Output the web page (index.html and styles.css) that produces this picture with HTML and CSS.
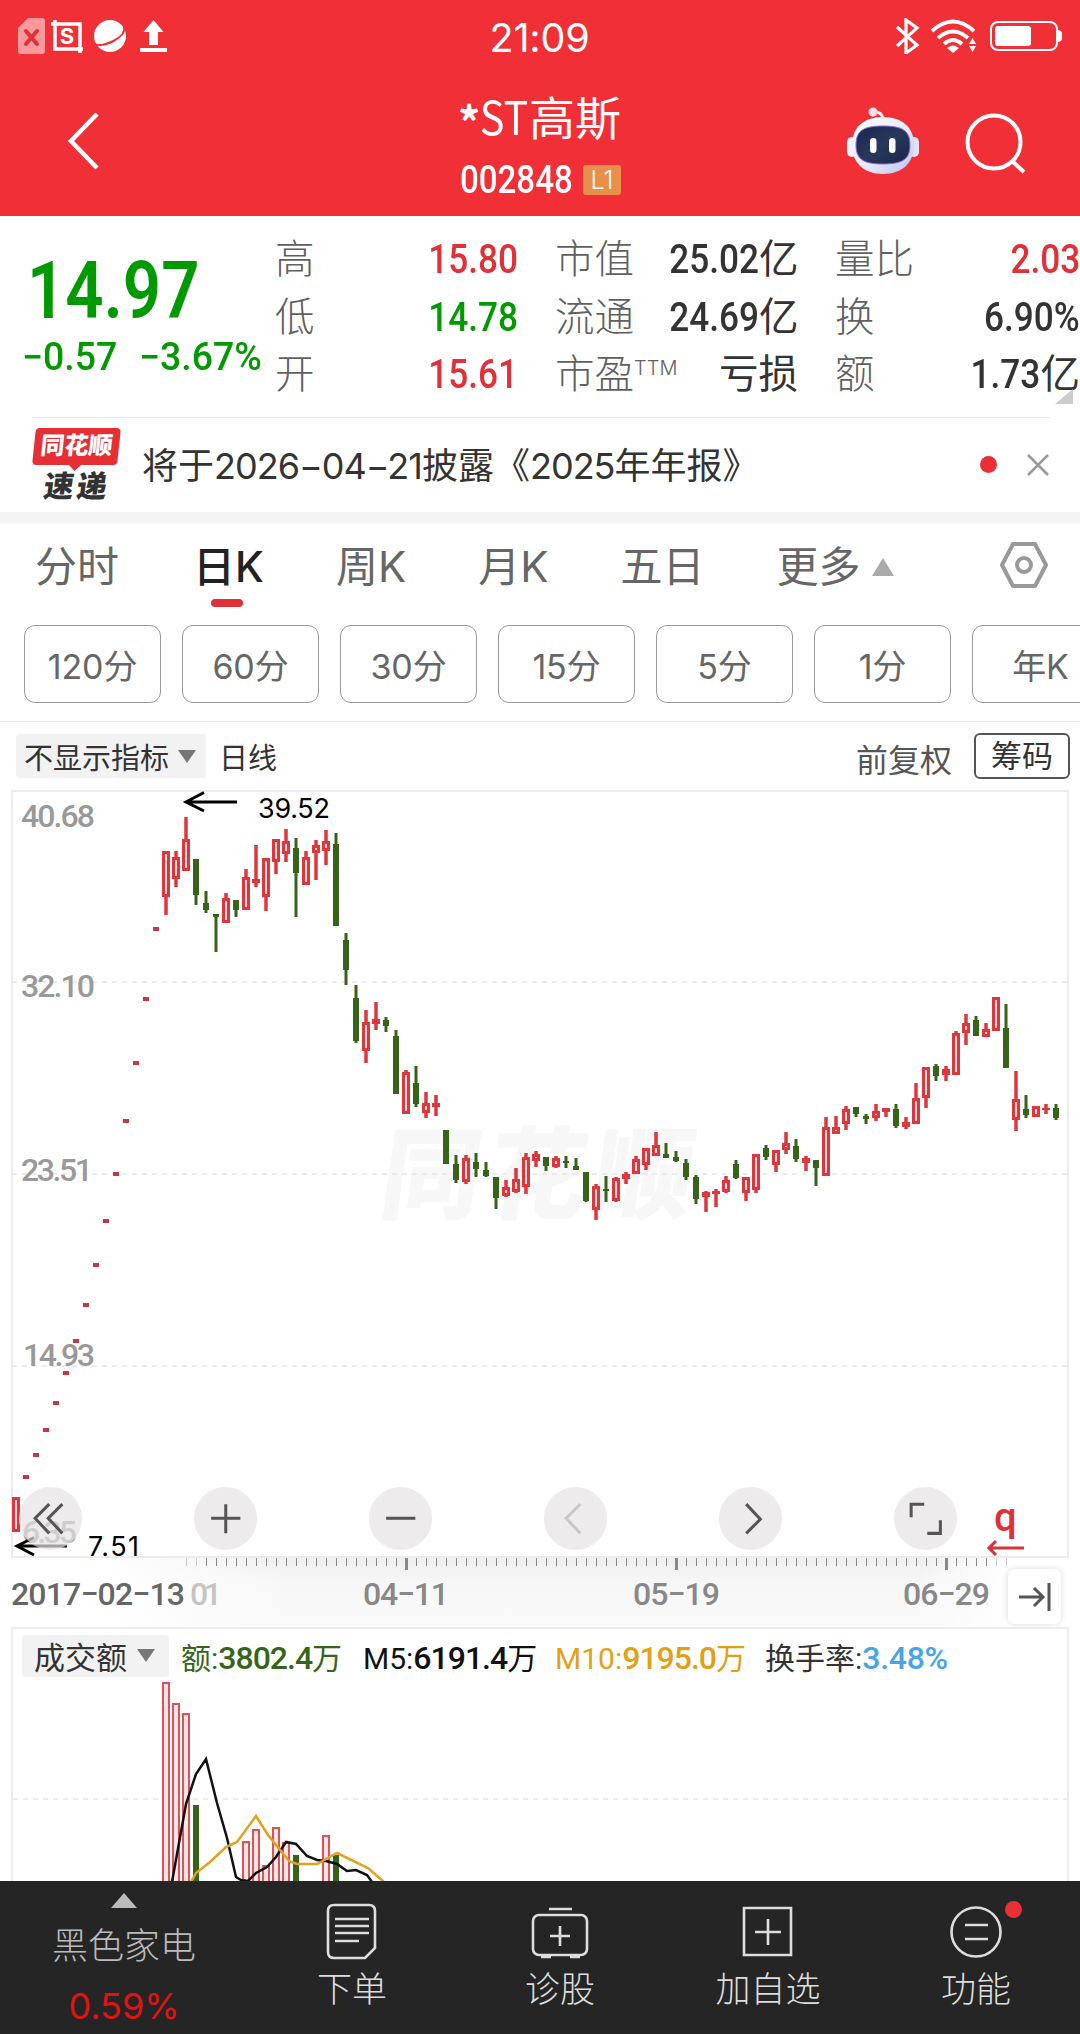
FILE: index.html
```html
<!DOCTYPE html>
<html lang="zh-CN">
<head>
  <meta charset="UTF-8">
  <meta name="viewport" content="width=device-width, initial-scale=1.0">
  <title>*ST高斯 002848</title>
  <link rel="stylesheet" href="styles.css">
</head>
<body>
  <header class="top">
    <div class="status">
      <svg class="status-left" width="150" height="36" viewBox="18 18 150 36">
        <path d="M28 18h14q3 0 3 3v30q0 3-3 3H21q-3 0-3-3V28z" fill="#fa989c"/>
        <path d="M26 31l11 13M37 31L26 44" stroke="#e03038" stroke-width="4" stroke-linecap="round"/>
        <path d="M51 24h29v29M55 20v29h28" fill="none" stroke="#fff" stroke-width="3.5"/>
        <text x="67" y="44" text-anchor="middle" class="s-mark">S</text>
        <circle cx="110" cy="36" r="16" fill="#fff"/>
        <path d="M94 44c10 4 33-7 30-17" fill="none" stroke="#f03036" stroke-width="2"/>
        <path d="M153.500 20l10 12h-5.500v13h-9V32h-5.500zM140 48h27v4h-27z" fill="#fff"/>
      </svg>
      <span class="clock">21:09</span>
      <svg class="status-right" width="168" height="36" viewBox="895 18 168 36" fill="none" stroke="#fff">
        <path d="M897 27l20 18-11 8V20l11 8-20 18" stroke-width="3.200"/>
        <path d="M932 31q21-19 42 0M938 38q15-13 30 0M944 44q9-8 18 0" stroke-width="4"/>
        <path d="M947 48q6-5 12 0l-6 5z" fill="#fff" stroke="none"/>
        <path d="M969 44l3.500-6 3.500 6zM969 46l3.500 6 3.500-6z" fill="#fff" stroke="none"/>
        <rect x="991" y="22" width="66" height="28" rx="7" stroke-width="2"/>
        <rect x="995" y="26" width="36" height="20" rx="3" fill="#fff" stroke="none"/>
        <path d="M1058 30q4 1 4 3v6q0 2-4 3z" fill="#fff" stroke="none"/>
      </svg>
    </div>
    <div class="titlebar">
      <svg class="back" width="34" height="60" viewBox="0 0 34 60"><path d="M31 3L5 30l26 27" fill="none" stroke="#fff" stroke-width="4.500"/></svg>
      <div class="title">
        <h1><b>*</b><span>ST</span>高斯</h1>
        <div class="code"><span class="code-num">002848</span><b>L1</b></div>
      </div>
      <svg class="robot" width="74" height="68" viewBox="0 0 74 68">
        <defs>
          <linearGradient id="shell" x1="0" y1="0" x2="1" y2="1"><stop offset="0" stop-color="#fff"/><stop offset=".55" stop-color="#e6eafb"/><stop offset="1" stop-color="#b9c0ef"/></linearGradient>
          <linearGradient id="face" x1="0" y1="0" x2="1" y2="1"><stop offset="0" stop-color="#16264a"/><stop offset=".5" stop-color="#29385c"/><stop offset="1" stop-color="#1a2547"/></linearGradient>
        </defs>
        <path d="M27 5q9-1 10 7" fill="none" stroke="#f5e9f3" stroke-width="3"/>
        <circle cx="27" cy="5" r="4.500" fill="#fbdfe6"/>
        <rect x="1" y="30" width="10" height="20" rx="5" fill="#f4f6ff"/>
        <rect x="63" y="30" width="10" height="20" rx="5" fill="#dfe3fa"/>
        <path d="M37 10c20 0 31 11 31 28S57 67 37 67 6 55 6 38s11-28 31-28z" fill="url(#shell)"/>
        <path d="M37 19c20 0 27 5 27 19s-7 19-27 19-27-5-27-19 7-19 27-19z" fill="url(#face)" stroke="#8d6be0" stroke-width="1"/>
        <rect x="24" y="31" width="6.500" height="15" rx="3.200" fill="#fff"/>
        <rect x="43" y="31" width="6.500" height="15" rx="3.200" fill="#fff"/>
      </svg>
      <svg class="search" width="64" height="64" viewBox="0 0 64 64" fill="none" stroke="#fff" stroke-width="4"><circle cx="31" cy="31" r="26.500"/><path d="M49 50l12 11"/></svg>
    </div>
  </header>

  <section class="quote">
    <div class="price">
      <strong>14.97</strong>
      <div class="change"><span>−0.57</span><span>−3.67%</span></div>
    </div>
    <dl class="stats">
      <dt>高</dt><dd class="up"><i>15.80</i></dd>
      <dt>市值</dt><dd><i>25.02</i>亿</dd>
      <dt>量比</dt><dd class="up"><i>2.03</i></dd>
      <dt>低</dt><dd class="down"><i>14.78</i></dd>
      <dt>流通</dt><dd><i>24.69</i>亿</dd>
      <dt>换</dt><dd><i>6.90%</i></dd>
      <dt>开</dt><dd class="up"><i>15.61</i></dd>
      <dt>市盈<sup>TTM</sup></dt><dd>亏损</dd>
      <dt>额</dt><dd><i>1.73</i>亿</dd>
    </dl>
    <span class="corner"></span>
  </section>

  <section class="notice">
    <div class="express"><span class="express-tag">同花顺</span><span class="express-name">速递</span></div>
    <p>将于<span>2026−04−21</span>披露《<span>2025</span>年年报》</p>
    <span class="dot"></span>
    <svg class="close" width="24" height="24" viewBox="0 0 24 24"><path d="M2 2l20 20M22 2L2 22" stroke="#999" stroke-width="2.500"/></svg>
  </section>

  <nav class="tabs">
    <a>分时</a><a class="active">日K</a><a>周K</a><a>月K</a><a>五日</a><a class="more">更多</a>
    <svg width="50" height="48" viewBox="0 0 50 48" fill="none" stroke="#999" stroke-width="4"><path d="M14 3h22l11 21-11 21H14L3 24z" stroke-linejoin="round"/><circle cx="25" cy="24" r="7"/></svg>
  </nav>
  <div class="periods">
    <button>120分</button><button>60分</button><button>30分</button><button>15分</button><button>5分</button><button>1分</button><button>年K</button>
  </div>

  <div class="toolbar">
    <span class="select">不显示指标</span>
    <span class="line-name">日线</span>
    <span class="adjust">前复权</span>
    <button>筹码</button>
  </div>

  <section class="chart">
    <svg id="kline" width="1080" height="840" viewBox="0 787 1080 840">
      <defs>
        <linearGradient id="ruler" x1="0" y1="0" x2="0" y2="1"><stop offset="0" stop-color="#efefef"/><stop offset=".4" stop-color="#f7f7f7"/><stop offset="1" stop-color="#f9f9f9"/></linearGradient>
        <linearGradient id="fade" x1="0" x2="1"><stop offset="0" stop-color="#fff"/><stop offset=".2" stop-color="#fff" stop-opacity="0"/><stop offset=".9" stop-color="#fff" stop-opacity="0"/><stop offset="1" stop-color="#fff"/></linearGradient>
      </defs>
      <rect x="110" y="1557" width="900" height="69" fill="url(#ruler)"/>
      <rect x="110" y="1557" width="900" height="69" fill="url(#fade)"/>
      <text class="watermark" x="0" y="0" transform="translate(377 1211) skewX(-8)" textLength="312">同花顺</text>
      <g class="grid">
        <path d="M12 982h1056M12 1174h1056M12 1366h1056"/>
      </g>
      <rect class="frame" x="12" y="791" width="1056" height="766"/>
      <g class="axis">
        <text x="21" y="827" textLength="74">40.68</text>
        <text x="21" y="997" textLength="74">32.10</text>
        <text x="21" y="1181" textLength="72">23.51</text>
        <text x="23" y="1366" textLength="72">14.93</text>
        <text x="22" y="1543" textLength="55">6.35</text>
      </g>
      <g id="candles"></g>
      <g class="mark">
        <path d="M237 802h-51M204 792.500l-18 9.500 18 9"/>
        <text x="258" y="818" textLength="72">39.52</text>
        <path d="M67 1546H17M34 1537.500L17 1546l17 9"/>
        <text x="88" y="1556" textLength="51">7.51</text>
      </g>
      <g class="flag">
        <text x="994" y="1531">q</text>
        <path d="M1024 1548h-34M996 1541l-7 7 7 7"/>
      </g>
      <g id="ticks"></g>
      <g class="dates">
        <text x="190" y="1605" textLength="32" class="faint">01</text>
        <text x="363" y="1605" textLength="86">04−11</text>
        <text x="633" y="1605" textLength="87">05−19</text>
        <text x="903" y="1605" textLength="87">06−29</text>
        <text x="11" y="1605" textLength="174" class="first">2017−02−13</text>
      </g>
      <rect class="end" x="1008" y="1569" width="53" height="55" rx="7"/>
      <path class="end-icon" d="M1019 1597h23M1034 1588l9 9-9 9M1049 1583v28"/>
    </svg>
    <div class="controls">
      <button><svg viewBox="0 0 62 62"><path d="M30 17L16 31l14 15M43 17L29 31l14 15"/></svg></button>
      <button><svg viewBox="0 0 62 62"><path d="M17 31h29M31.500 17v29"/></svg></button>
      <button><svg viewBox="0 0 62 62"><path d="M17 31h29"/></svg></button>
      <button class="off"><svg viewBox="0 0 62 62"><path d="M36 17L22 31l14 15"/></svg></button>
      <button><svg viewBox="0 0 62 62"><path d="M27 17l14 15-14 14"/></svg></button>
      <button><svg viewBox="0 0 62 62"><path d="M30 17H17v13M46 33v13H33"/></svg></button>
    </div>
  </section>

  <section class="volume">
    <div class="legend">
      <span class="select">成交额</span>
      <span class="v1">额:<i>3802.4</i>万</span>
      <span class="v2">M5:<i>6191.4</i>万</span>
      <span class="v3">M10:<i>9195.0</i>万</span>
      <span class="v4">换手率:<i>3.48%</i></span>
    </div>
    <svg width="1054" height="200" viewBox="13 1681 1054 200">
      <path class="grid" d="M13 1799h1054"/>
      <g id="bars"></g>
      <polyline class="m5" points="172,1882 186,1804 196,1774 206,1759 217,1803 227,1838 236,1877 241,1880 248,1881 256,1873 267,1867 276,1857 286,1842 296,1844 307,1856 317,1860 326,1861 337,1864 347,1871 356,1870 367,1875 372,1882"/>
      <polyline class="m10" points="191,1882 196,1873 210,1862 226,1847 237,1842 256,1816 268,1835 289,1861 297,1864 317,1864 337,1853 368,1868 384,1882"/>
    </svg>
  </section>

  <footer class="bottom">
    <a class="sector"><span class="arrow"></span><span>黑色家电</span><em>0.59%</em></a>
    <a><svg width="58" height="58" viewBox="0 0 58 58"><path d="M11 2h35q6 0 6 6v37L42 55H11q-6 0-6-6V8q0-6 6-6zM12 16h34M12 23h34M12 30h34M12 38h24"/></svg>下单</a>
    <a><svg width="58" height="58" viewBox="0 0 58 58"><rect x="2" y="12" width="54" height="40" rx="6"/><path d="M18 6h23M29 23v20M19 33h20M10 54h10M39 54h10"/></svg>诊股</a>
    <a><svg width="58" height="58" viewBox="0 0 58 58"><path d="M5 5h47v47H5zM16 29h26M29 16v26"/></svg>加自选</a>
    <a><svg width="58" height="58" viewBox="0 0 58 58"><circle cx="29" cy="29" r="24.500"/><path d="M18 22h23M18 36h23"/></svg>功能<span class="dot"></span></a>
  </footer>

  <script src="chart.js"></script>
</body>
</html>
```
FILE: styles.css
```css
* {
  box-sizing: border-box;
}

body {
  margin: 0;
  width: 1080px;
  height: 2034px;
  overflow: hidden;
  background: #fff;
  color: #333;
  font-family: Inter, "Noto Sans CJK SC", sans-serif;
}

button {
  font: inherit;
  color: inherit;
  padding: 0;
  background: none;
  border: none;
}

i, em {
  font-style: normal;
}

svg {
  display: block;
}

/* header */
.top {
  height: 216px;
  background: #f03036;
  color: #fff;
}

.status {
  height: 72px;
  padding: 18px 17px 0 18px;
  display: flex;
  justify-content: space-between;
}

.s-mark {
  font: bold 22px Inter, sans-serif;
  fill: #fff;
}

.clock {
  margin-left: 16px;
  font-size: 39.5px;
  line-height: 40px;
  letter-spacing: -.2px;
}

.titlebar {
  height: 144px;
  display: flex;
  align-items: flex-start;
}

.back {
  margin: 39px 0 0 66px;
}

.title {
  width: 161px;
  margin: 18px 0 0 360px;
}

.title h1 {
  margin: 0 0 0 -2px;
  display: flex;
  align-items: center;
  height: 50px;
  font-size: 46px;
  font-weight: 400;
  line-height: 50px;
  white-space: nowrap;
  font-family: "Noto Sans CJK SC", sans-serif;
}

.title h1 b {
  width: 20px;
  padding-top: 10px;
  font-size: 44px;
}

.title h1 span {
  transform: scaleX(.9);
  margin: 0 -2px 0 -1px;
}

.code {
  display: flex;
  align-items: center;
  justify-content: space-between;
  margin-top: 23px;
  height: 34px;
}

.code-num {
  width: 112px;
  font: 500 38px/34px Roboto, sans-serif;
  transform: scaleX(.87);
  transform-origin: left;
}

.code b {
  width: 38px;
  height: 30px;
  border-radius: 3px;
  background: #e8904a;
  font-size: 25px;
  font-weight: 300;
  line-height: 30px;
  text-align: center;
}

.robot {
  margin: 35px 0 0 225px;
}

.search {
  margin: 39px 0 0 43px;
}

/* quote */
.quote {
  position: relative;
  display: flex;
  height: 201px;
}

.price {
  width: 276px;
  padding-left: 27px;
  color: #009900;
  font-family: Roboto, sans-serif;
}

.price strong {
  display: block;
  height: 94px;
  margin-top: 28px;
  font-size: 79px;
  font-weight: 600;
  line-height: 94px;
  transform: scaleX(.85);
  transform-origin: left;
}

.change {
  display: flex;
  margin-left: -5px;
  font-size: 38px;
  font-weight: 500;
  line-height: 38px;
  white-space: nowrap;
}

.change span {
  width: 117px;
  transform: scaleX(.985);
  transform-origin: left;
}

.stats {
  margin: 15px 0 0;
  display: grid;
  grid-template-columns: 93px 150px 139px 141px 129px 153px;
  grid-template-rows: repeat(3, 57.5px);
  line-height: 57px;
  font-size: 39.5px;
}

.stats dt {
  color: #606060;
  font-weight: 300;
  white-space: nowrap;
}

.stats dt:nth-of-type(3n+2) {
  padding-left: 37px;
}

.stats dt:nth-of-type(3n) {
  padding-left: 37px;
}

.stats sup {
  font-size: 20px;
  line-height: 1;
  vertical-align: 13px;
}

.stats dd {
  margin: 0;
  text-align: right;
  white-space: nowrap;
}

.stats i {
  display: inline-block;
  font: 500 40px/57px Roboto, sans-serif;
  transform: scaleX(.88);
  transform-origin: right;
}

.up {
  color: #e03038;
}

.down {
  color: #009900;
}

.corner {
  position: absolute;
  right: 7px;
  bottom: 13px;
  border-left: 18px solid transparent;
  border-bottom: 15px solid #ccc;
}

/* notice */
.notice {
  display: flex;
  height: 95px;
  margin: 0 30px 0 32px;
  border-top: 1px solid #ebebeb;
}

.express {
  display: flex;
  flex-direction: column;
  align-items: center;
  width: 89px;
  padding-top: 10px;
}

.express-tag {
  position: relative;
  width: 85px;
  height: 37px;
  border-radius: 4px;
  background: #e62e34;
  color: #fff;
  font-size: 24px;
  font-weight: 900;
  line-height: 36px;
  text-align: center;
  transform: skewX(-6deg);
}

.express-tag::after {
  content: "";
  position: absolute;
  left: 36px;
  top: 36px;
  border: 7px solid transparent;
  border-top-color: #e62e34;
  border-bottom: 0;
}

.express-name {
  margin-top: 5px;
  font-size: 30px;
  font-weight: 900;
  line-height: 32px;
  letter-spacing: 3px;
  transform: skewX(-8deg);
}

.notice p {
  flex: 1;
  margin: 0 0 0 21px;
  font-size: 36px;
  line-height: 96px;
  white-space: nowrap;
}

.notice p span {
  letter-spacing: -1px;
}

.notice .dot {
  margin: 38px 29px 0 0;
}

.dot {
  width: 17px;
  height: 17px;
  border-radius: 50%;
  background: #e83035;
}

.close {
  margin-top: 35px;
}

/* tabs */
.tabs {
  display: flex;
  height: 113px;
  padding: 0 31px 0 35px;
  border-top: 11px solid #f5f4f5;
  color: #666;
  font-size: 42px;
  line-height: 87px;
  white-space: nowrap;
}

.tabs a {
  position: relative;
  margin-right: 72px;
}

.tabs a:first-child {
  margin-right: 74px;
}

.tabs .active {
  color: #222;
  font-weight: 500;
}

.tabs .active::after {
  content: "";
  position: absolute;
  left: 18px;
  top: 76px;
  width: 32px;
  height: 8px;
  border-radius: 4px;
  background: #e03038;
}

.tabs .more {
  margin-right: 0;
}

.tabs .more::after {
  content: "";
  display: inline-block;
  margin-left: 12px;
  vertical-align: 6px;
  border: 11px solid transparent;
  border-bottom: 18px solid #aaa;
  border-top: 0;
}

.tabs svg {
  margin: 18px 0 0 auto;
}

.periods {
  display: flex;
  gap: 21px;
  height: 97px;
  padding-left: 24px;
  overflow: hidden;
  border-bottom: 1px solid #e8e8e8;
}

.periods button {
  flex: none;
  width: 137px;
  height: 78px;
  border: 1.5px solid #999;
  border-radius: 11px;
  color: #666;
  font-size: 34px;
  letter-spacing: -.1px;
}

.toolbar {
  display: flex;
  align-items: center;
  height: 65px;
  padding: 3px 10px 0 16px;
  font-size: 29px;
}

.select {
  display: flex;
  align-items: center;
  justify-content: space-between;
  width: 190px;
  height: 44px;
  padding: 0 10px 0 8px;
  border-radius: 4px;
  background: #f2f2f2;
  white-space: nowrap;
}

.select::after {
  content: "";
  border: 9px solid transparent;
  border-top: 13px solid #777;
  border-bottom: 0;
}

.line-name {
  margin-left: 13px;
}

.adjust {
  margin-left: auto;
  margin-right: 22px;
  padding-top: 3px;
  font-size: 32px;
  color: #555;
}

.toolbar button {
  width: 96px;
  height: 46px;
  border: 2px solid #555;
  border-radius: 6px;
  font-size: 31px;
  line-height: 40px;
}

/* k-line chart */
.chart {
  position: relative;
  height: 840px;
}

.grid,
.grid path {
  fill: none;
  stroke: #e6e6e6;
  stroke-width: 1.5;
  stroke-dasharray: 5 5;
}

.frame {
  fill: none;
  stroke: #ececec;
  stroke-width: 2;
}

.watermark {
  font: 900 100px "Noto Sans CJK SC", sans-serif;
  fill: #f7f7f7;
}

.axis text {
  font: 500 32px Roboto, sans-serif;
  fill: #999;
}

.mark path {
  fill: none;
  stroke: #000;
  stroke-width: 3;
}

.mark text {
  font: 400 27px Inter, sans-serif;
}

.flag text {
  font: 500 40px Roboto, sans-serif;
  fill: #e03038;
}

.flag path {
  fill: none;
  stroke: #d8323a;
  stroke-width: 3;
}

.dates text {
  font: 500 32px Roboto, sans-serif;
  fill: #888;
}

.dates .faint {
  fill: #c4c4c4;
}

.dates .first {
  fill: #666;
}

.end {
  fill: #fff;
  filter: drop-shadow(0 0 3px rgba(0, 0, 0, .15));
}

.end-icon {
  fill: none;
  stroke: #555;
  stroke-width: 3;
}

.controls {
  position: absolute;
  left: 19px;
  top: 700px;
  display: flex;
  gap: 112.5px;
}

.controls button {
  width: 62.5px;
  height: 62.5px;
  border-radius: 50%;
  background: rgba(231, 227, 229, .7);
}

.controls path {
  fill: none;
  stroke: #555;
  stroke-width: 3;
}

.controls .off path {
  stroke: #c8c8c8;
}

/* volume */
.volume {
  height: 254px;
  margin: 0 11px;
  border: 2px solid #ececec;
  border-bottom: 0;
}

.legend {
  display: flex;
  align-items: center;
  height: 52px;
  padding-top: 1px;
  padding-left: 9px;
  font-size: 30px;
  font-family: Roboto, "Noto Sans CJK SC", sans-serif;
  white-space: nowrap;
}

.legend .select {
  width: 147px;
  height: 42px;
  padding: 0 14px 0 12px;
  margin-right: 12px;
  font-size: 31px;
}

.legend i {
  font-size: 32px;
  font-weight: 500;
  letter-spacing: -1px;
}

.v1 {
  width: 182px;
  color: #35651a;
}

.v2 {
  width: 192px;
  color: #111;
}

.v3 {
  width: 210px;
  color: #e3a014;
}

.legend .v4 i {
  color: #45a5e6;
  letter-spacing: -.3px;
}

.m5,
.m10 {
  fill: none;
  stroke: #111;
  stroke-width: 2.5;
}

.m10 {
  stroke: #e3a11c;
}

/* bottom bar */
.bottom {
  display: flex;
  height: 153px;
  background: #252525;
  color: #ddd;
  font-size: 35px;
  font-weight: 300;
}

.bottom a {
  position: relative;
  flex: 1;
  display: flex;
  flex-direction: column;
  align-items: center;
  padding-top: 22px;
  line-height: 56px;
}

.bottom .sector {
  flex: none;
  width: 248px;
  padding-top: 12px;
  color: #bbb;
  font-size: 36px;
}

.sector .arrow {
  border: 13px solid transparent;
  border-bottom: 15px solid #bbb;
  border-top: 0;
  margin-bottom: 10px;
}

.sector em {
  margin-top: 4px;
  color: #e01313;
  font-weight: 400;
}

.bottom svg {
  fill: none;
  stroke: #ddd;
  stroke-width: 2.6;
}

.bottom .dot {
  position: absolute;
  left: 133px;
  top: 20px;
}
```
FILE: chart.js
```js
const UP = '#de363c';
const DOWN = '#356419';
const GAP = 10;
const START = 16;

// limit-up days: a single short dash each
const dashes = [1477, 1455, 1430, 1403, 1373, 1341, 1305, 1265, 1221, 1174, 1121, 1063, 999, 929];

// [direction, high, body top, body bottom, low]
const candles = [
  ['r',851,851,897,915],['r',851,857,879,887],['r',817,839,871,871],['g',859,859,895,905],
  ['g',891,903,910,913],['g',914,914,917,952],['r',893,898,923,923],['g',900,900,910,917],
  ['r',869,877,910,910],['r',845,879,883,887],['r',858,858,897,911],['r',839,839,862,874],
  ['r',829,841,854,862],['g',838,848,873,917],['r',851,857,885,885],['r',840,845,853,880],
  ['r',830,841,851,865],['g',833,844,926,926],['g',933,940,970,985],['g',985,998,1041,1043],
  ['r',1010,1022,1051,1063],['r',1002,1019,1024,1030],['g',1017,1020,1026,1032],['g',1030,1036,1094,1094],
  ['r',1070,1072,1114,1114],['g',1066,1083,1104,1107],['r',1092,1103,1113,1118],['r',1095,1103,1107,1116],
  ['g',1130,1130,1164,1164],['g',1155,1164,1180,1183],['r',1155,1158,1182,1184],['g',1153,1162,1169,1177],
  ['g',1162,1170,1176,1177],['g',1177,1177,1198,1209],['r',1180,1187,1196,1197],['r',1168,1179,1192,1193],
  ['r',1153,1157,1187,1194],['r',1151,1154,1161,1167],['g',1157,1157,1166,1171],['r',1156,1158,1167,1168],
  ['g',1156,1161,1163,1168],['g',1158,1166,1170,1170],['g',1172,1172,1201,1202],['r',1184,1186,1210,1220],
  ['g',1176,1189,1191,1202],['r',1177,1178,1201,1202],['r',1172,1174,1179,1184],['r',1156,1159,1174,1174],
  ['r',1148,1148,1165,1170],['r',1132,1145,1156,1156],['g',1143,1154,1158,1158],['g',1151,1157,1161,1162],
  ['g',1159,1163,1177,1180],['g',1175,1177,1199,1204],['r',1191,1192,1197,1212],['r',1189,1191,1194,1207],
  ['r',1176,1180,1192,1193],['g',1160,1164,1178,1179],['r',1177,1177,1193,1201],['r',1154,1154,1190,1193],
  ['g',1145,1148,1157,1160],['r',1150,1150,1165,1172],['r',1132,1143,1150,1154],['g',1139,1146,1159,1162],
  ['r',1156,1158,1163,1171],['g',1160,1160,1168,1186],['r',1117,1127,1176,1176],['r',1116,1127,1134,1134],
  ['r',1106,1109,1124,1130],['g',1107,1107,1114,1117],['g',1114,1116,1119,1124],['r',1104,1111,1118,1121],
  ['r',1108,1108,1112,1117],['g',1104,1109,1126,1128],['r',1117,1122,1127,1129],['r',1083,1098,1124,1124],
  ['r',1067,1067,1098,1108],['g',1064,1066,1076,1081],['r',1066,1069,1075,1081],['r',1031,1033,1075,1075],
  ['r',1014,1023,1033,1045],['g',1016,1020,1036,1036],['r',1023,1029,1037,1037],['r',997,997,1031,1031],
  ['g',1004,1028,1068,1068],['r',1071,1099,1120,1131],['g',1095,1109,1115,1118],['r',1106,1106,1117,1117],
  ['r',1104,1108,1110,1114],['g',1104,1108,1118,1120]
];

// [x, top, direction]
const volumes = [
  [166,1682,'r'],[176,1703,'r'],[186,1713,'r'],[196,1805,'g'],[246,1841,'r'],[256,1829,'r'],
  [266,1865,'r'],[276,1827,'r'],[286,1842,'r'],[296,1855,'g'],[326,1835,'r'],[336,1855,'g']
];

const rect = (x, y, w, h, fill) => `<rect x="${x}" y="${y}" width="${w}" height="${h}" fill="${fill}"/>`;

function candle(x, [dir, high, top, bottom, low]) {
  if (dir === 'g') {
    return rect(x - 1.5, high, 3, low - high, DOWN) + rect(x - 3, top, 6, bottom - top, DOWN);
  }
  let out = rect(x - 1.75, high, 3.5, low - high, UP) + rect(x - 4, top, 8, bottom - top, UP);
  if (bottom - top > 6) {
    out += rect(x - 1, top + 3, 2, bottom - top - 6, '#ffd9d9');
  }
  return out;
}

let html = candle(START, ['r', 1497, 1497, 1532, 1532]);
dashes.forEach((y, i) => {
  html += rect(START + GAP * (i + 1) - 3, y - 2, 6, 4, '#c03a42');
});
candles.forEach((c, i) => {
  html += candle(START + GAP * (i + 15), c);
});
document.getElementById('candles').innerHTML = html;

html = '';
for (let x = 186; x <= 1006; x += GAP) {
  const major = x === 406 || x === 676 || x === 946;
  const edge = x < 206 || x > 990;
  html += major ? rect(x - 1, 1558, 3, 12, '#888') : rect(x, 1558, 1, 8, edge ? '#ccc' : '#888');
}
document.getElementById('ticks').innerHTML = html;

document.getElementById('bars').innerHTML = volumes.map(([x, top, dir]) =>
  dir === 'g'
    ? rect(x - 3, top, 6, 1881 - top, DOWN)
    : `<rect x="${x - 3}" y="${top + 1}" width="6" height="210" fill="#fde4e4" stroke="#d9545a" stroke-width="2"/>`
).join('');
```
